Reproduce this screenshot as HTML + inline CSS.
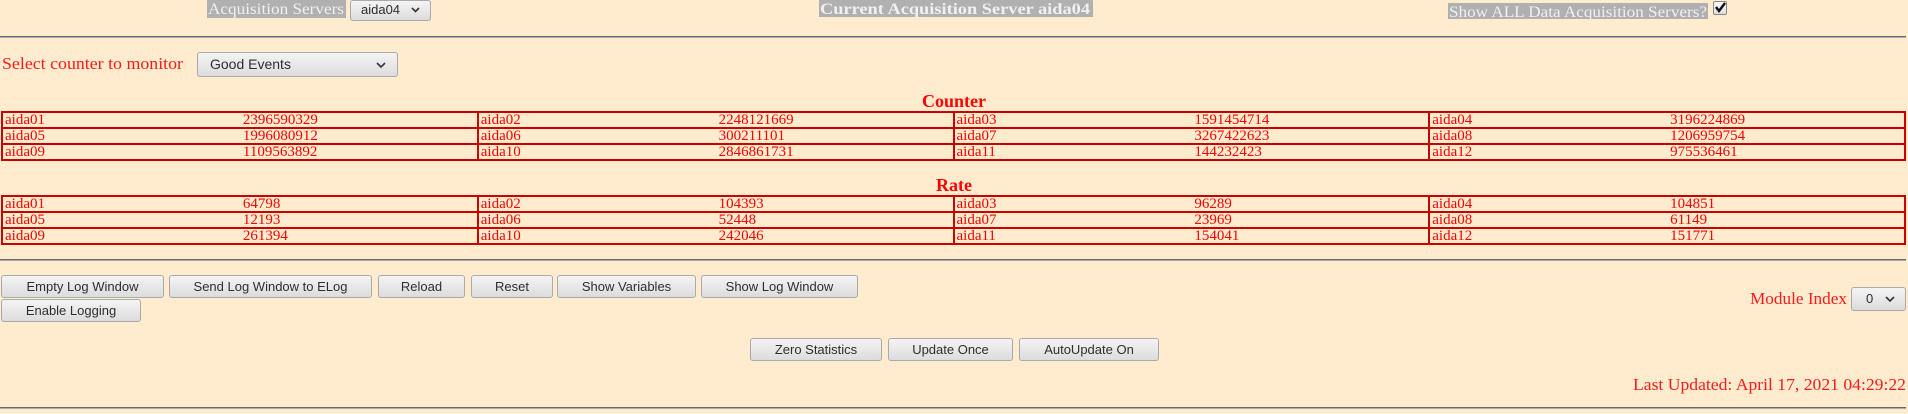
<!DOCTYPE html>
<html><head><meta charset="utf-8"><style>
html,body{margin:0;padding:0;}
body{width:1908px;height:414px;background:#ffebcd;position:relative;overflow:hidden;font-family:"Liberation Serif",serif;}
.abs{position:absolute;}
.hr{position:absolute;left:0;width:1906px;height:2px;background:#6a6a6a;border-bottom:1px solid #aaa;box-sizing:border-box;}
.btn{position:absolute;box-sizing:border-box;border:1px solid #aaa;border-radius:3px;background:linear-gradient(#f4f4f4,#dcdcdc);font-family:"Liberation Sans",sans-serif;font-size:13px;color:#2e2e2e;text-align:center;white-space:nowrap;}
table{position:absolute;left:1px;border-collapse:collapse;table-layout:fixed;width:1905px;}
td{height:14px;padding:0 0 0 2px;border-top:2px solid #cc0000;border-bottom:2px solid #cc0000;color:#ff0000;font-size:15px;line-height:14px;white-space:nowrap;overflow:hidden;}
td.n{border-left:2px solid #cc0000;}
td.v{padding-left:3px;}
tr td:last-child{border-right:2px solid #cc0000;}
svg{position:absolute;left:0;top:0;}
</style></head><body>

<div class="abs" style="left:207px;top:0;width:139px;height:18px;background:#b0b0b0"></div>
<div class="abs" style="left:819px;top:0;width:274px;height:17px;background:#b0b0b0"></div>
<div class="abs" style="left:1448px;top:3px;width:260px;height:16px;background:#b0b0b0"></div>

<div class="btn" style="left:350px;top:0;width:81px;height:21px;line-height:17px;text-align:left;padding-left:10px">aida04</div>
<div class="abs" style="left:1713px;top:1px;width:14px;height:14px;box-sizing:border-box;border:1px solid #888;border-radius:2px;background:linear-gradient(#fafafa,#ddd)"></div>

<div class="hr" style="top:36px"></div>

<div class="btn" style="left:197px;top:52px;width:201px;height:25px;line-height:23px;text-align:left;padding-left:12px;font-size:14px">Good Events</div>

<table style="top:111px">
<colgroup><col><col><col><col><col><col><col><col></colgroup>
<tr><td class="n">aida01</td><td class="v">2396590329</td><td class="n">aida02</td><td class="v">2248121669</td><td class="n">aida03</td><td class="v">1591454714</td><td class="n">aida04</td><td class="v">3196224869</td></tr>
<tr><td class="n">aida05</td><td class="v">1996080912</td><td class="n">aida06</td><td class="v">300211101</td><td class="n">aida07</td><td class="v">3267422623</td><td class="n">aida08</td><td class="v">1206959754</td></tr>
<tr><td class="n">aida09</td><td class="v">1109563892</td><td class="n">aida10</td><td class="v">2846861731</td><td class="n">aida11</td><td class="v">144232423</td><td class="n">aida12</td><td class="v">975536461</td></tr>
</table>

<table style="top:195px">
<colgroup><col><col><col><col><col><col><col><col></colgroup>
<tr><td class="n">aida01</td><td class="v">64798</td><td class="n">aida02</td><td class="v">104393</td><td class="n">aida03</td><td class="v">96289</td><td class="n">aida04</td><td class="v">104851</td></tr>
<tr><td class="n">aida05</td><td class="v">12193</td><td class="n">aida06</td><td class="v">52448</td><td class="n">aida07</td><td class="v">23969</td><td class="n">aida08</td><td class="v">61149</td></tr>
<tr><td class="n">aida09</td><td class="v">261394</td><td class="n">aida10</td><td class="v">242046</td><td class="n">aida11</td><td class="v">154041</td><td class="n">aida12</td><td class="v">151771</td></tr>
</table>

<div class="hr" style="top:259px"></div>

<div class="btn" style="left:1px;top:275px;width:163px;height:23px;line-height:21px">Empty Log Window</div>
<div class="btn" style="left:169px;top:275px;width:203px;height:23px;line-height:21px">Send Log Window to ELog</div>
<div class="btn" style="left:378px;top:275px;width:87px;height:23px;line-height:21px">Reload</div>
<div class="btn" style="left:471px;top:275px;width:82px;height:23px;line-height:21px">Reset</div>
<div class="btn" style="left:557px;top:275px;width:139px;height:23px;line-height:21px">Show Variables</div>
<div class="btn" style="left:701px;top:275px;width:157px;height:23px;line-height:21px">Show Log Window</div>
<div class="btn" style="left:1px;top:299px;width:140px;height:23px;line-height:21px">Enable Logging</div>

<div class="btn" style="left:1851px;top:287px;width:55px;height:24px;line-height:22px;text-align:left;padding-left:14px">0</div>

<div class="btn" style="left:750px;top:338px;width:132px;height:23px;line-height:21px">Zero Statistics</div>
<div class="btn" style="left:888px;top:338px;width:125px;height:23px;line-height:21px">Update Once</div>
<div class="btn" style="left:1019px;top:338px;width:140px;height:23px;line-height:21px">AutoUpdate On</div>

<div class="hr" style="top:407px"></div>

<svg width="1908" height="414" xmlns="http://www.w3.org/2000/svg">
<g font-family="Liberation Serif, serif">
<text x="208" y="14" font-size="16" fill="#f0f0f0" textLength="136" lengthAdjust="spacingAndGlyphs">Acquisition Servers</text>
<text x="820" y="14" font-size="16" font-weight="bold" fill="#f0f0f0" textLength="270" lengthAdjust="spacingAndGlyphs">Current Acquisition Server aida04</text>
<text x="1449" y="17" font-size="16" fill="#f0f0f0" textLength="258" lengthAdjust="spacingAndGlyphs">Show ALL Data Acquisition Servers?</text>
<text x="2" y="69" font-size="17" fill="#ff1a1a" textLength="181" lengthAdjust="spacingAndGlyphs">Select counter to monitor</text>
<text x="954" y="107" font-size="18" font-weight="bold" fill="#ff0000" text-anchor="middle">Counter</text>
<text x="954" y="191" font-size="18" font-weight="bold" fill="#ff0000" text-anchor="middle">Rate</text>
<text x="1750" y="304" font-size="17" fill="#ff1a1a" textLength="97" lengthAdjust="spacingAndGlyphs">Module Index</text>
<text x="1633" y="390" font-size="17" fill="#ff1a1a" textLength="273" lengthAdjust="spacingAndGlyphs">Last Updated: April 17, 2021 04:29:22</text>
</g>
<g fill="none" stroke="#333" stroke-width="1.6">
<path d="M412 8 l3.5 3.5 l3.5 -3.5"/>
<path d="M377 63 l4 4 l4 -4"/>
<path d="M1886 297 l4 4 l4 -4"/>
</g>
<path d="M1716 7 l3 4 l6 -8" fill="none" stroke="#111" stroke-width="2.4"/>
</svg>
</body></html>
